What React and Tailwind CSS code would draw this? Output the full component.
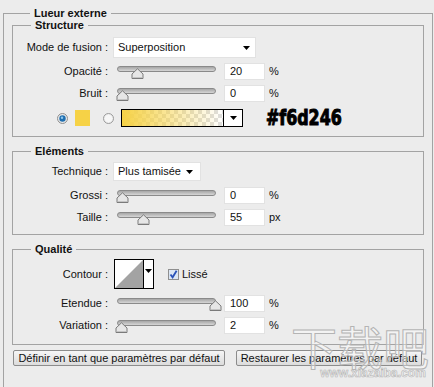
import React from "react";

const F = "font-['Liberation_Sans',Arial,sans-serif]";

function Thumb({ x }) {
  return (
    <svg
      className="absolute top-[5px]"
      style={{ left: x - 6 }}
      width="13"
      height="11"
      viewBox="0 0 13 11"
    >
      <path d="M1 10.5 L1 6 L6.5 0.8 L12 6 L12 10.5 Z" fill="#e6e6e6" stroke="#7a7a7a" strokeWidth="1" />
      <path d="M2 9.5 L11 9.5" stroke="#c4c4c4" strokeWidth="1" />
    </svg>
  );
}

function Slider({ pos }) {
  return (
    <div className="relative ml-[9px] h-[17px] w-[99px] shrink-0">
      <div className="absolute left-0 right-0 top-[3px] h-[6px] rounded-full border border-[#8a8a8a] bg-gradient-to-b from-[#a6a6a6] to-[#d6d6d6]" />
      <Thumb x={pos} />
    </div>
  );
}

function Field({ value }) {
  return (
    <div className="ml-[8px] flex h-[17px] w-[41px] shrink-0 items-center border border-[#e2e2e2] bg-white pl-[5px] text-[11px] leading-none text-[#111]">
      {value}
    </div>
  );
}

function Label({ children }) {
  return <div className="w-[95px] shrink-0 text-right text-[11px] leading-[13px] text-[#111]">{children}</div>;
}

function SliderRow({ label, pos, value, unit, className = "" }) {
  return (
    <div className={"flex items-center " + className}>
      <Label>{label}</Label>
      <Slider pos={pos} />
      <Field value={value} />
      <span className="ml-[4px] text-[11px] leading-none text-[#111]">{unit}</span>
    </div>
  );
}

function Arrow({ className = "" }) {
  return (
    <svg className={className} width="7" height="4" viewBox="0 0 7 4">
      <path d="M0 0 L7 0 L3.5 4 Z" fill="#000" />
    </svg>
  );
}

function Legend({ children }) {
  return <legend className="ml-[18px] px-[4px] text-[11px] font-bold leading-[12px] text-[#111]">{children}</legend>;
}

export default function App() {
  return (
    <div className={"relative h-[387px] w-[434px] overflow-hidden bg-[#ececec] pt-[7px] " + F}>
      <fieldset className="ml-[3px] h-[420px] w-[430px] border border-[#a3a3a3] px-[8px]">
        <Legend>Lueur externe</Legend>

        <fieldset className="border border-[#a3a3a3] pb-[9px] pt-[6px]">
          <Legend>Structure</Legend>
          <div className="flex items-center">
            <Label>Mode de fusion :</Label>
            <div className="ml-[5px] flex h-[21px] w-[143px] items-center justify-between border border-[#e2e2e2] bg-white pl-[4px] pr-[5px] text-[11px] text-[#111]">
              <span>Superposition</span>
              <Arrow />
            </div>
          </div>
          <SliderRow className="mt-[5px]" label="Opacité :" pos={20} value="20" unit="%" />
          <SliderRow className="mt-[5px]" label="Bruit :" pos={5} value="0" unit="%" />
          <div className="mt-[7px] flex h-[18px] items-center pl-[44px]">
            <svg width="11" height="11" viewBox="0 0 11 11">
              <circle cx="5.5" cy="5.5" r="5" fill="#e8e8e8" stroke="#8f8f8f" />
              <circle cx="5.5" cy="5.5" r="3.2" fill="#1f6fb0" />
              <circle cx="5" cy="4.8" r="1.2" fill="#8fc8ef" />
            </svg>
            <div className="ml-[7px] h-[16px] w-[15px] bg-[#f6d246]" />
            <svg className="ml-[13px]" width="11" height="11" viewBox="0 0 11 11">
              <circle cx="5.5" cy="5.5" r="5" fill="#eeeeee" stroke="#9a9a9a" />
              <circle cx="5.5" cy="5.5" r="3.5" fill="#f7f7f7" />
            </svg>
            <div className="ml-[7px] flex h-[18px] w-[122px] border border-black">
              <div className="h-full flex-1 bg-[linear-gradient(to_right,#f6d246,rgba(246,210,70,0)),repeating-conic-gradient(#dedede_0_25%,#ffffff_0_50%)] bg-[length:100%_100%,8px_8px]" />
              <div className="flex h-full w-[19px] items-center justify-center border-l border-black bg-white">
                <Arrow />
              </div>
            </div>
            <span className="ml-[23px] origin-left scale-x-[0.84] font-['DejaVu_Sans_Condensed',sans-serif] text-[21px] font-bold leading-none text-black [-webkit-text-stroke:1px_#000]">
              #f6d246
            </span>
          </div>
        </fieldset>

        <fieldset className="mt-[8px] border border-[#a3a3a3] pb-[8px] pt-[5px]">
          <Legend>Eléments</Legend>
          <div className="flex items-center">
            <Label>Technique :</Label>
            <div className="ml-[5px] flex h-[19px] w-[88px] items-center justify-between border border-[#e2e2e2] bg-white pl-[4px] pr-[7px] text-[11px] text-[#111]">
              <span>Plus tamisée</span>
              <Arrow />
            </div>
          </div>
          <SliderRow className="mt-[6px]" label="Grossi :" pos={5} value="0" unit="%" />
          <SliderRow className="mt-[5px]" label="Taille :" pos={26} value="55" unit="px" />
        </fieldset>

        <fieldset className="mt-[8px] border border-[#a3a3a3] pb-[10px] pt-[4px]">
          <Legend>Qualité</Legend>
          <div className="flex items-center">
            <Label>Contour :</Label>
            <div className="ml-[6px] flex h-[30px] w-[40px] border border-black bg-white">
              <svg width="28" height="28" viewBox="0 0 28 28">
                <polygon points="0,28 28,0 28,28" fill="#a3a3a3" />
              </svg>
              <div className="flex flex-1 items-center justify-center border-l border-black">
                <Arrow className="-mt-[6px]" />
              </div>
            </div>
            <svg className="ml-[14px]" width="11" height="11" viewBox="0 0 11 11">
              <rect x="0.5" y="0.5" width="10" height="10" fill="#dbe6f4" stroke="#8f8f8f" />
              <path d="M2.5 5.5 L4.6 8.3 L8.6 1.8" fill="none" stroke="#2a52b8" strokeWidth="1.8" />
            </svg>
            <span className="ml-[3px] text-[11px] text-[#111]">Lissé</span>
          </div>
          <SliderRow className="mt-[6px]" label="Etendue :" pos={98} value="100" unit="%" />
          <SliderRow className="mt-[5px]" label="Variation :" pos={4} value="2" unit="%" />
        </fieldset>

        <div className="mt-[5px] flex items-center gap-[11px] pl-[1px]">
          <button className="h-[16px] w-[212px] rounded-[2px] border border-[#8c8c8c] bg-gradient-to-b from-[#f6f6f6] to-[#dcdcdc] text-[11px] leading-none text-[#111]">
            Définir en tant que paramètres par défaut
          </button>
          <button className="h-[16px] w-[186px] rounded-[2px] border border-[#8c8c8c] bg-gradient-to-b from-[#f6f6f6] to-[#dcdcdc] text-[11px] leading-none text-[#111]">
            Restaurer les paramètres par défaut
          </button>
        </div>
      </fieldset>

      <div className="pointer-events-none absolute left-[291px] top-[319px] flex flex-col items-center">
        <span className="font-['Noto_Sans_CJK_SC',sans-serif] text-[46px] leading-[52px] text-white/40 [-webkit-text-stroke:1px_#b4b4b4]">
          下载吧
        </span>
        <span className="-mt-[4px] ml-[26px] text-[12px] font-bold leading-none text-white/40 [-webkit-text-stroke:0.6px_#b4b4b4]">
          www.xiazaiba.com
        </span>
      </div>
    </div>
  );
}
